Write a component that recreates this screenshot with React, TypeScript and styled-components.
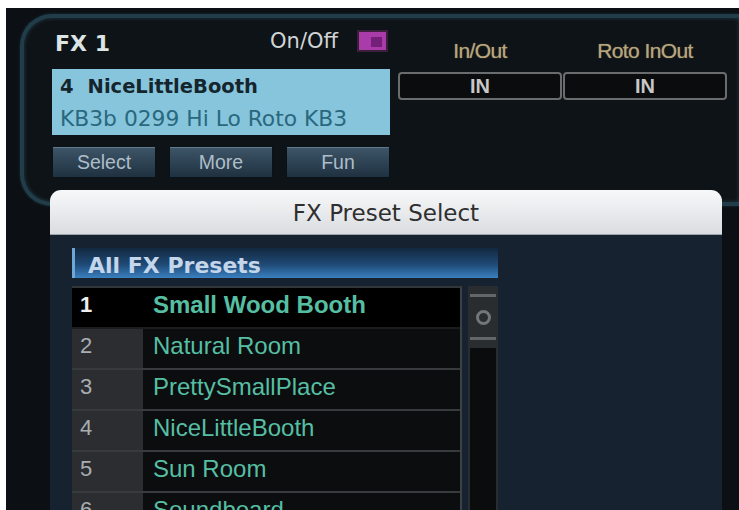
import styled, { createGlobalStyle } from 'styled-components'

const GlobalStyle = createGlobalStyle`
  html, body {
    margin: 0;
    padding: 0;
    background: #ffffff;
  }
  body {
    font-family: 'DejaVu Sans', sans-serif;
  }
  * {
    box-sizing: border-box;
  }
`

// 프리셋 목록 (첫 번째 항목이 선택된 상태)
const presets = [
  { id: 1, name: 'Small Wood Booth' },
  { id: 2, name: 'Natural Room' },
  { id: 3, name: 'PrettySmallPlace' },
  { id: 4, name: 'NiceLittleBooth' },
  { id: 5, name: 'Sun Room' },
  { id: 6, name: 'Soundboard' },
]

const selectedId = 1

export default function App() {
  return (
    <>
      <GlobalStyle />
      <Screen>
        <Panel>
          <LeftCol>
            <HeaderRow>
              <PanelTitle>FX 1</PanelTitle>
              <PowerGroup>
                <PowerLabel>On/Off</PowerLabel>
                <Toggle>
                  <ToggleKnob />
                </Toggle>
              </PowerGroup>
            </HeaderRow>

            <Lcd>
              <LcdLine>
                <LcdNum>4</LcdNum>NiceLittleBooth
              </LcdLine>
              <LcdSub>KB3b 0299 Hi Lo Roto KB3</LcdSub>
            </Lcd>

            <ButtonRow>
              <PanelButton>Select</PanelButton>
              <PanelButton>More</PanelButton>
              <PanelButton>Fun</PanelButton>
            </ButtonRow>
          </LeftCol>

          <RightCol>
            <LabelRow>
              <RouteLabel>In/Out</RouteLabel>
              <RouteLabel>Roto InOut</RouteLabel>
            </LabelRow>
            <InRow>
              <InBox>IN</InBox>
              <InBox>IN</InBox>
            </InRow>
          </RightCol>
        </Panel>

        <Modal>
          <TitleBar>FX Preset Select</TitleBar>
          <ModalBody>
            <PresetsPane>
              <SectionHeader>All FX Presets</SectionHeader>
              <ListArea>
                <List>
                  {presets.map((p) => (
                    <Row key={p.id} $selected={p.id === selectedId}>
                      <NumCell $selected={p.id === selectedId}>{p.id}</NumCell>
                      <NameCell $selected={p.id === selectedId}>{p.name}</NameCell>
                    </Row>
                  ))}
                </List>
                <Scrollbar>
                  <Thumb>
                    <ThumbLine />
                    <ThumbRing />
                    <ThumbLine />
                  </Thumb>
                </Scrollbar>
              </ListArea>
            </PresetsPane>
          </ModalBody>
        </Modal>
      </Screen>
    </>
  )
}

const Screen = styled.div`
  position: relative;
  margin: 8px 0 0 6px;
  height: 502px;
  overflow: hidden;
  background: #0c1014;
  padding: 6px 0 0 14px;
`

const Panel = styled.div`
  display: flex;
  gap: 8px;
  height: 192px;
  padding-left: 28px;
  border: 4px solid #203d49;
  border-right: none;
  border-radius: 32px 0 0 32px;
  background: #0e1317;
  box-shadow: inset 0 0 4px rgba(60, 110, 130, 0.45), 0 0 3px rgba(40, 80, 95, 0.5);
`

const LeftCol = styled.div`
  width: 338px;
  padding-top: 11px;
`

const HeaderRow = styled.div`
  display: flex;
  align-items: center;
  justify-content: space-between;
  height: 30px;
  padding: 0 2px 0 3px;
`

const PanelTitle = styled.div`
  font-family: 'DejaVu Sans', sans-serif;
  font-weight: 700;
  font-size: 22px;
  line-height: 30px;
  color: #dde4e4;
`

const PowerGroup = styled.div`
  display: flex;
  align-items: center;
  gap: 19px;
`

const PowerLabel = styled.div`
  font-family: 'DejaVu Sans', sans-serif;
  font-size: 21px;
  line-height: 30px;
  margin-top: -6px;
  color: #d0d4d5;
`

const Toggle = styled.div`
  display: flex;
  align-items: flex-end;
  justify-content: flex-end;
  width: 31px;
  height: 22px;
  padding: 3px 4px;
  border: 2px solid #3b1f3b;
  background: #a93ca9;
  margin-top: -6px;
`

const ToggleKnob = styled.div`
  width: 11px;
  height: 10px;
  background: #74207a;
`

const Lcd = styled.div`
  margin-top: 10px;
  height: 66px;
  padding: 4px 8px 0;
  background: #86c5db;
`

const LcdLine = styled.div`
  font-family: 'DejaVu Sans', sans-serif;
  font-weight: 700;
  font-size: 19.5px;
  line-height: 28px;
  color: #15252d;
  white-space: nowrap;
`

const LcdNum = styled.span`
  margin-right: 14px;
`

const LcdSub = styled.div`
  margin-top: 3px;
  font-family: 'DejaVu Sans', sans-serif;
  font-size: 21.8px;
  line-height: 30px;
  color: #2a687e;
  white-space: nowrap;
`

const ButtonRow = styled.div`
  display: flex;
  justify-content: space-between;
  margin-top: 11px;
`

const PanelButton = styled.div`
  width: 104px;
  height: 32px;
  border: 1px solid #0a1218;
  background: linear-gradient(#3e5668, #1e3141);
  box-shadow: inset 0 1px 0 #62798a;
  color: #aebdc8;
  font-family: 'Liberation Sans', Arial, sans-serif;
  font-size: 19.5px;
  line-height: 30px;
  text-align: center;
`

const RightCol = styled.div`
  padding-top: 20px;
`

const LabelRow = styled.div`
  display: grid;
  grid-template-columns: 164px 164px;
  gap: 1px;
`

const RouteLabel = styled.div`
  font-family: 'Liberation Sans', Arial, sans-serif;
  font-size: 21px;
  letter-spacing: -0.6px;
  line-height: 26px;
  color: #b7a67c;
  text-align: center;
  text-shadow: 0 0 1px rgba(183, 166, 124, 0.7);
`

const InRow = styled.div`
  display: grid;
  grid-template-columns: 164px 164px;
  gap: 1px;
  margin-top: 8px;
`

const InBox = styled.div`
  height: 28px;
  border: 2px solid #6a6c6e;
  border-radius: 4px;
  background: #0b0c0d;
  color: #c8c8c8;
  font-family: 'Liberation Sans', Arial, sans-serif;
  font-weight: 700;
  font-size: 20px;
  line-height: 24px;
  text-align: center;
`

const Modal = styled.div`
  position: absolute;
  left: 44px;
  top: 182px;
  width: 672px;
  bottom: 0;
  display: flex;
  flex-direction: column;
`

const TitleBar = styled.div`
  height: 45px;
  padding-top: 2px;
  border-radius: 11px 11px 0 0;
  background: linear-gradient(#f7f8f9, #dadde1);
  border-bottom: 1px solid #9fa4a9;
  color: #2f2f2f;
  font-family: 'DejaVu Sans', sans-serif;
  font-size: 23px;
  line-height: 42px;
  text-align: center;
`

const ModalBody = styled.div`
  flex: 1;
  padding: 13px 0 0 22px;
  background: #172230;
`

const PresetsPane = styled.div`
  width: 426px;
`

const SectionHeader = styled.div`
  height: 30px;
  padding: 6px 0 0 13px;
  border-left: 3px solid #6ea6d6;
  background: linear-gradient(#13283f, #1f4a76 55%, #3a80c0);
  color: #c4d6ea;
  font-family: 'DejaVu Sans', sans-serif;
  font-weight: 700;
  font-size: 22px;
  line-height: 24px;
`

const ListArea = styled.div`
  display: flex;
  gap: 6px;
  margin-top: 8px;
`

const List = styled.div`
  width: 390px;
  border-top: 2px solid #33373a;
  border-right: 2px solid #3d4044;
`

const Row = styled.div<{ $selected: boolean }>`
  display: grid;
  grid-template-columns: 71px 1fr;
  height: 41px;
  border-bottom: 2px solid ${(p) => (p.$selected ? '#1a1c1e' : '#383b3e')};
`

const NumCell = styled.div<{ $selected: boolean }>`
  padding-left: 8px;
  background: ${(p) => (p.$selected ? '#000000' : '#2b2d30')};
  color: ${(p) => (p.$selected ? '#eeeeee' : '#a9adb1')};
  font-family: 'Liberation Sans', Arial, sans-serif;
  font-weight: ${(p) => (p.$selected ? 700 : 400)};
  font-size: 22px;
  line-height: 34px;
`

const NameCell = styled.div<{ $selected: boolean }>`
  padding-left: 10px;
  background: ${(p) => (p.$selected ? '#000000' : '#0b0d0f')};
  color: #56bfa3;
  font-family: 'Liberation Sans', Arial, sans-serif;
  font-weight: ${(p) => (p.$selected ? 700 : 400)};
  font-size: 24px;
  line-height: 34px;
  white-space: nowrap;
`

const Scrollbar = styled.div`
  width: 30px;
  background: #0a0c0d;
  border-left: 2px solid #2a2d30;
  border-right: 2px solid #2a2d30;
`

const Thumb = styled.div`
  display: flex;
  flex-direction: column;
  align-items: center;
  justify-content: space-between;
  height: 62px;
  padding: 8px 0;
  background: #2a2d30;
`

const ThumbLine = styled.div`
  width: 100%;
  height: 3px;
  background: #63676b;
`

const ThumbRing = styled.div`
  width: 15px;
  height: 15px;
  border: 3px solid #72767a;
  border-radius: 50%;
`
